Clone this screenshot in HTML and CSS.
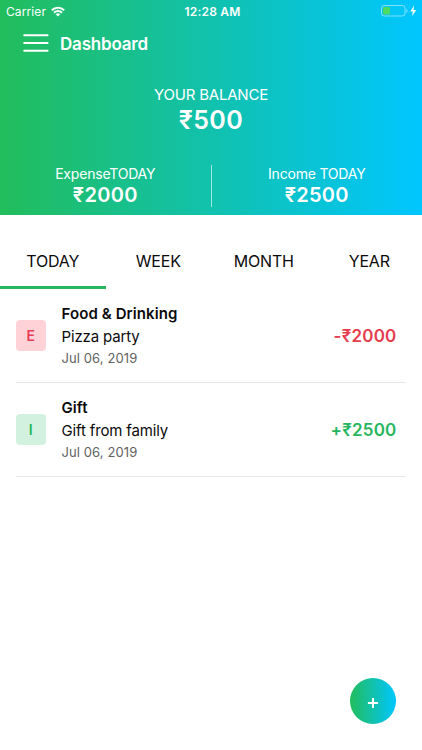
FILE: index.html
```
<!DOCTYPE html>
<html lang="en">
<head>
<meta charset="utf-8">
<title>Dashboard</title>
<link rel="stylesheet" href="styles.css">
</head>
<body>
<header class="hero">
  <div class="status">
    <div class="carrier"><span>Carrier</span>
      <svg width="14" height="11" viewBox="0 0 14 11" fill="none" stroke="#fff" stroke-width="2"><path d="M.8 4.2a8.8 8.8 0 0 1 12.4 0M3 6.7a5.7 5.7 0 0 1 8 0"/><path d="M7 10.6 4.7 8.3a3.3 3.3 0 0 1 4.6 0z" fill="#fff" stroke="none"/></svg>
    </div>
    <div class="clock">12:28 AM</div>
    <div class="battery">
      <svg width="36" height="12" viewBox="0 0 36 12"><rect x=".5" y=".5" width="23.5" height="10.5" rx="2.7" fill="none" stroke="#fff" stroke-opacity=".5"/><rect x="2" y="2" width="7" height="7.5" rx="1" fill="#4cd964"/><path d="M25.3 4v4q1.3-.6 1.3-2t-1.3-2z" fill="#fff" fill-opacity=".5"/><path d="M33 .6 29.3 6.4h2.6L31 11l4.3-6h-2.8z" fill="#fff"/></svg>
    </div>
  </div>
  <div class="navbar">
    <svg width="26" height="20" viewBox="0 0 26 20" stroke="#fff" stroke-width="2" stroke-linecap="round"><path d="M1.2 1.2h23.4M1.2 9h23.4M1.2 16.8h23.4"/></svg>
    <h1>Dashboard</h1>
  </div>
  <div class="balance">
    <div class="balance-label">YOUR BALANCE</div>
    <div class="balance-value">₹500</div>
  </div>
  <div class="totals">
    <div class="total"><div class="total-label">ExpenseTODAY</div><div class="total-value">₹2000</div></div>
    <div class="divider"></div>
    <div class="total"><div class="total-label">Income TODAY</div><div class="total-value">₹2500</div></div>
  </div>
</header>
<nav class="tabs">
  <div class="tab active">TODAY</div>
  <div class="tab">WEEK</div>
  <div class="tab">MONTH</div>
  <div class="tab">YEAR</div>
</nav>
<main class="list">
  <article class="row">
    <div class="badge out">E</div>
    <div class="info"><div class="title">Food &amp; Drinking</div><div class="note">Pizza party</div><div class="date">Jul 06, 2019</div></div>
    <div class="amount out-text">-₹2000</div>
  </article>
  <article class="row">
    <div class="badge in">I</div>
    <div class="info"><div class="title">Gift</div><div class="note">Gift from family</div><div class="date">Jul 06, 2019</div></div>
    <div class="amount in-text">+₹2500</div>
  </article>
</main>
<div class="fab"><svg width="12" height="12" viewBox="0 0 12 12" stroke="#fff" stroke-width="2"><path d="M.9 6h10.2M6 .9v10.2"/></svg></div>
</body>
</html>
```
FILE: styles.css
```
* { box-sizing: border-box; }
body {
  margin: 0;
  height: 750px;
  overflow: hidden;
  background: #fff;
  color: #0b0b0b;
  font-family: Inter, "Noto Sans", sans-serif;
  white-space: nowrap;
}
.hero {
  height: 215px;
  background: linear-gradient(90deg, #22bd5b, #00c6ff);
  color: #fff;
}
.status {
  height: 22px;
  display: grid;
  grid-template-columns: 1fr auto 1fr;
  align-items: center;
  padding: 0 5px 0 6px;
}
.carrier { display: flex; align-items: center; gap: 5px; font-size: 12px; letter-spacing: .1px; }
.clock { padding-left: 2px; font-size: 12px; font-weight: 600; letter-spacing: .2px; }
.battery { display: flex; justify-content: flex-end; }
.navbar { height: 43px; display: flex; align-items: center; gap: 11px; padding-left: 23px; }
h1 { margin: 0; font-size: 17px; font-weight: 600; line-height: 24px; letter-spacing: -.2px; }
.balance { margin-top: 20px; text-align: center; }
.balance-label { font-size: 15px; line-height: 20px; letter-spacing: -.2px; }
.balance-value { font-size: 25px; font-weight: 600; line-height: 30px; letter-spacing: .4px; }
.totals { margin-top: 30px; display: flex; }
.total { flex: 1; text-align: center; }
.total-label { font-size: 14px; line-height: 18px; letter-spacing: -.2px; }
.total-value { font-size: 20px; font-weight: 600; line-height: 24px; letter-spacing: .3px; }
.divider { width: 1px; height: 42px; background: rgba(255, 255, 255, .6); }
.tabs { height: 74px; display: grid; grid-template-columns: repeat(4, 1fr); padding-top: 16px; }
.tab {
  height: 58px;
  line-height: 60px;
  text-align: center;
  font-size: 16px;
  letter-spacing: -.2px;
  border-bottom: 3px solid transparent;
}
.tab.active { border-color: #27b660; }
.list { padding: 0 16px 0 15.5px; }
.row {
  height: 94px;
  display: flex;
  align-items: center;
  border-bottom: 1px solid #e6e6e6;
  padding: 0 9.5px 0 0;
}
.badge {
  width: 30.5px;
  height: 30.5px;
  margin-right: 15.5px;
  border-radius: 4px;
  text-align: center;
  font-size: 14px;
  font-weight: 600;
  line-height: 31px;
}
.out { background: #ffd2d8; color: #e83b55; }
.in { background: #d2f2df; color: #27b660; }
.info { flex: 1; }
.title { font-size: 15px; font-weight: 600; line-height: 24px; letter-spacing: .1px; }
.note { font-size: 15px; line-height: 22px; letter-spacing: -.15px; }
.date { font-size: 13px; line-height: 21px; letter-spacing: .1px; color: #626262; }
.amount { margin-top: 1px; font-size: 17px; font-weight: 600; letter-spacing: .2px; }
.out-text { color: #e63c50; }
.in-text { color: #27b660; }
.fab {
  position: absolute;
  left: 350px;
  top: 678px;
  width: 46px;
  height: 46px;
  padding-top: 4px;
  border-radius: 50%;
  display: flex;
  align-items: center;
  justify-content: center;
  background: linear-gradient(90deg, #22bd5b, #00c6ff);
}
```
